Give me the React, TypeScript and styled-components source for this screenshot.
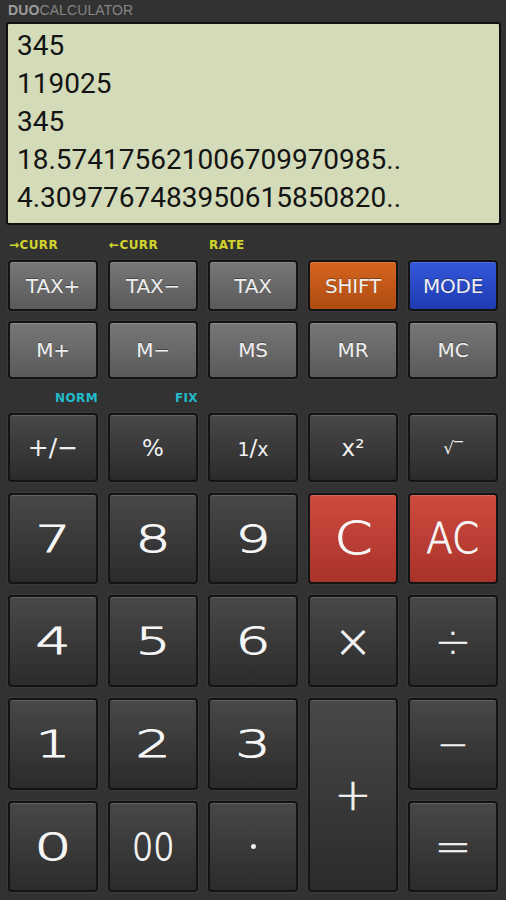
import React from "react";
import styled, { createGlobalStyle, css } from "styled-components";

const Global = createGlobalStyle`
  html, body { margin: 0; padding: 0; background: #323232; }
  #root { width: 506px; height: 900px; }
`;

const Page = styled.div`
  width: 506px;
  height: 900px;
  box-sizing: border-box;
  padding: 0 8px;
  background: #323232;
  display: flex;
  flex-direction: column;
  overflow: hidden;
`;

const Header = styled.div`
  height: 22px;
  line-height: 20px;
  font-family: "Liberation Sans", Arial, sans-serif;
  font-size: 14px;
  color: #858585;
  letter-spacing: 0.1px;
  b { color: #9c9c9c; font-weight: 700; }
`;

const Display = styled.div`
  height: 203px;
  margin: 0 -3px 0 -2px;
  box-sizing: border-box;
  border: 2px solid #101010;
  border-radius: 3px;
  background: #d3dbb8;
  padding: 3px 9px 0;
  font-family: Roboto, "Noto Sans", sans-serif;
  font-size: 28px;
  line-height: 38px;
  color: #141414;
`;

const Line = styled.div`
  white-space: nowrap;
`;

const LabelRow = styled.div<{ $h: number; $pt: number }>`
  height: ${(p) => p.$h}px;
  box-sizing: border-box;
  padding-top: ${(p) => p.$pt}px;
  display: grid;
  grid-template-columns: repeat(5, 90px);
  column-gap: 10px;
  font-family: "DejaVu Sans", sans-serif;
  font-weight: 700;
  font-size: 12px;
  line-height: 14px;
`;

const Label = styled.span<{ $color: string; $align: "left" | "right" }>`
  color: ${(p) => p.$color};
  text-align: ${(p) => p.$align};
  padding: ${(p) => (p.$align === "left" ? "0 0 0 1px" : "0")};
  letter-spacing: 0.4px;
`;

const KeyGrid = styled.div<{ $rows: string; $gap: number }>`
  display: grid;
  grid-template-columns: repeat(5, 90px);
  grid-template-rows: ${(p) => p.$rows};
  column-gap: 10px;
  row-gap: ${(p) => p.$gap}px;
`;

type Variant = "gray" | "dark" | "red" | "orange" | "blue";

const fills: Record<Variant, string> = {
  gray: "linear-gradient(#777777, #5a5a5a)",
  dark: "linear-gradient(#484848, #2b2b2b)",
  red: "linear-gradient(#cf4a3f, #a8332a)",
  orange: "linear-gradient(#d4651f, #b04b12)",
  blue: "linear-gradient(#3557db, #1e3bb0)",
};

const Key = styled.button<{ $v: Variant; $span?: number }>`
  all: unset;
  box-sizing: border-box;
  display: flex;
  align-items: center;
  justify-content: center;
  border: 2px solid #131313;
  border-radius: 4px;
  background: ${(p) => fills[p.$v]};
  box-shadow: inset 0 1px 0 rgba(255, 255, 255, 0.14),
    0 0 0 1px rgba(255, 255, 255, 0.04);
  color: #efefef;
  font-family: "DejaVu Sans", sans-serif;
  ${(p) =>
    p.$span &&
    css`
      grid-row: span ${p.$span};
    `}
`;

const Word = styled.span`
  font-size: 20px;
  letter-spacing: -0.2px;
  text-shadow: 0 -1px 0 rgba(0, 0, 0, 0.35);
`;

const Fn = styled.span<{ $size?: number }>`
  font-size: ${(p) => p.$size ?? 23}px;
  display: inline-flex;
  align-items: baseline;
  color: #f0f0f0;
  sup, sub { font-size: 19px; }
  sup { vertical-align: 5px; }
  sub { vertical-align: -4px; }
`;

const Digit = styled.span<{ $sx: number; $size?: number }>`
  display: inline-block;
  font-size: ${(p) => p.$size ?? 38}px;
  font-weight: 300;
  -webkit-text-stroke: 0.9px #f6f6f6;
  transform: scaleX(${(p) => p.$sx});
  line-height: 1;
  color: #f6f6f6;
`;

const Op = styled.span<{ $size: number }>`
  display: inline-block;
  font-family: "DejaVu Sans", sans-serif;
  font-weight: 300;
  -webkit-text-stroke: 0.6px #f2f2f2;
  font-size: ${(p) => p.$size}px;
  line-height: 1;
  color: #f2f2f2;
`;

const Dot = styled.span`
  width: 5px;
  height: 5px;
  border-radius: 50%;
  background: #eeeeee;
`;

const lines = [
  "345",
  "119025",
  "345",
  "18.574175621006709970985..",
  "4.3097767483950615850820..",
];

export default function App() {
  return (
    <>
      <Global />
      <Page>
        <Header>
          <b>DUO</b>CALCULATOR
        </Header>
        <Display>
          {lines.map((l, i) => (
            <Line key={i}>{l}</Line>
          ))}
        </Display>
        <LabelRow $h={35} $pt={13}>
          <Label $color="#d2d22c" $align="left">→CURR</Label>
          <Label $color="#d2d22c" $align="left">←CURR</Label>
          <Label $color="#d2d22c" $align="left">RATE</Label>
        </LabelRow>
        <KeyGrid $rows="51px 58px" $gap={10}>
          <Key $v="gray"><Word>TAX+</Word></Key>
          <Key $v="gray"><Word>TAX−</Word></Key>
          <Key $v="gray"><Word>TAX</Word></Key>
          <Key $v="orange"><Word>SHIFT</Word></Key>
          <Key $v="blue"><Word>MODE</Word></Key>
          <Key $v="gray"><Word>M+</Word></Key>
          <Key $v="gray"><Word>M−</Word></Key>
          <Key $v="gray"><Word>MS</Word></Key>
          <Key $v="gray"><Word>MR</Word></Key>
          <Key $v="gray"><Word>MC</Word></Key>
        </KeyGrid>
        <LabelRow $h={34} $pt={12}>
          <Label $color="#22bccb" $align="right">NORM</Label>
          <Label $color="#22bccb" $align="right">FIX</Label>
        </LabelRow>
        <KeyGrid $rows="69px 91px 92px 92px 91px" $gap={11}>
          <Key $v="dark"><Fn $size={25}>+/−</Fn></Key>
          <Key $v="dark"><Fn>%</Fn></Key>
          <Key $v="dark"><Fn><sup>1</sup>/<sub>x</sub></Fn></Key>
          <Key $v="dark"><Fn>x²</Fn></Key>
          <Key $v="dark"><Fn $size={17}>√‾</Fn></Key>

          <Key $v="dark"><Digit $sx={1.45}>7</Digit></Key>
          <Key $v="dark"><Digit $sx={1.45}>8</Digit></Key>
          <Key $v="dark"><Digit $sx={1.45}>9</Digit></Key>
          <Key $v="red"><Digit $sx={1.25} $size={44}>C</Digit></Key>
          <Key $v="red"><Digit $sx={0.92} $size={42}>AC</Digit></Key>

          <Key $v="dark"><Digit $sx={1.45}>4</Digit></Key>
          <Key $v="dark"><Digit $sx={1.45}>5</Digit></Key>
          <Key $v="dark"><Digit $sx={1.45}>6</Digit></Key>
          <Key $v="dark"><Op $size={46}>×</Op></Key>
          <Key $v="dark"><Op $size={44}>÷</Op></Key>

          <Key $v="dark"><Digit $sx={1.45}>1</Digit></Key>
          <Key $v="dark"><Digit $sx={1.45}>2</Digit></Key>
          <Key $v="dark"><Digit $sx={1.45}>3</Digit></Key>
          <Key $v="dark" $span={2}><Op $size={44}>+</Op></Key>
          <Key $v="dark"><Op $size={38}>−</Op></Key>

          <Key $v="dark"><Digit $sx={1.55}>0</Digit></Key>
          <Key $v="dark"><Digit $sx={0.88}>00</Digit></Key>
          <Key $v="dark"><Dot /></Key>
          <Key $v="dark"><Op $size={44}>=</Op></Key>
        </KeyGrid>
      </Page>
    </>
  );
}
